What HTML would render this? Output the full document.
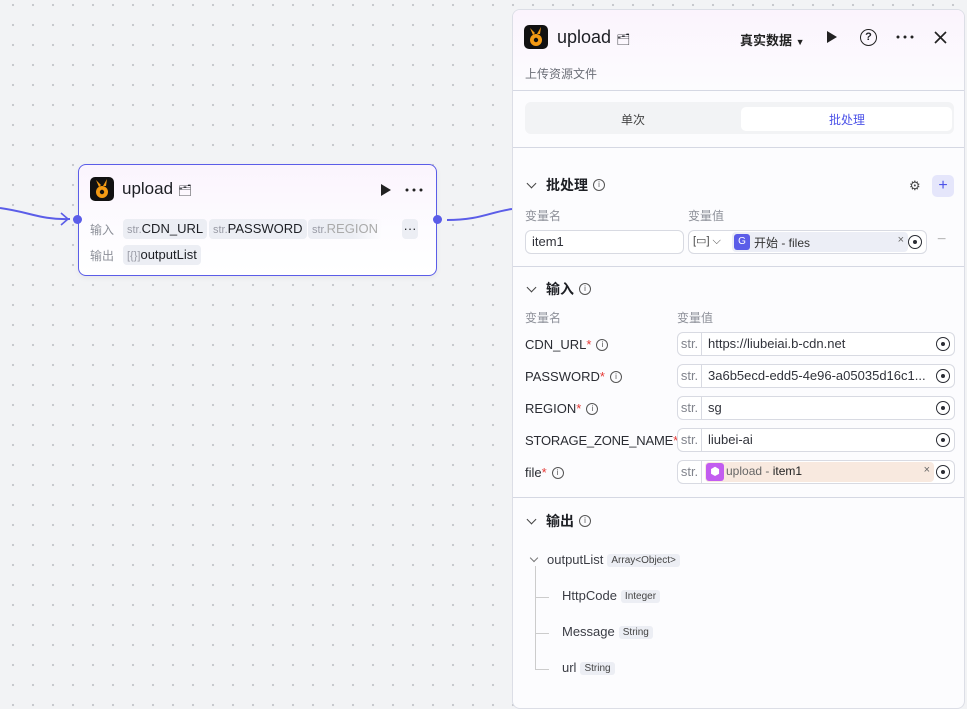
<!DOCTYPE html>
<html><head><meta charset="utf-8"><style>
*{box-sizing:border-box;margin:0;padding:0}
body{width:967px;height:698px;overflow:hidden;position:relative;font-family:"Liberation Sans","Noto Sans CJK SC",sans-serif;background-color:#f2f3f5;
background-image:radial-gradient(circle,#c6c7cc 1px,transparent 1.3px);background-size:20px 20px;background-position:3px -5px;color:#1d1f24}
.a{position:absolute}
.node{left:78px;top:164px;width:359px;height:112px;border:1px solid #5b5de8;border-radius:8px;background:linear-gradient(#fbf4fd,#fdfcff 60%,#fff);box-shadow:0 2px 6px rgba(0,0,0,.05)}
.logo{width:24px;height:24px;border-radius:5px;background:#111;overflow:hidden}
.tag{background:#eceef4;border-radius:4px;height:20px;line-height:20px;font-size:13px;padding:0 4px;color:#1d1f24}
.tag i{font-style:normal;color:#9a9ca6;font-size:11px}
.lbl{font-size:12px;color:#8d9099}
.panel{left:512px;top:9px;width:453px;height:700px;border:1px solid #dcdee6;border-radius:8px;background:#fcfcfe;overflow:hidden}
.hline{height:1px;background:#d5d8e3;left:0;width:453px}
.inp{border:1px solid #d8dae2;border-radius:6px;height:24px;background:#fff;font-size:13px}
.str{position:absolute;left:0;top:0;width:24px;height:22px;border-right:1px solid #d8dae2;color:#80838c;font-size:13px;line-height:22px;text-align:center}
.val{position:absolute;left:30px;top:0;line-height:22px;color:#30323a}
.tgt{position:absolute;right:4px;top:4px;width:14px;height:14px;border:1.5px solid #2a2c33;border-radius:50%}
.tgt:after{content:"";position:absolute;left:3.5px;top:3.5px;width:4px;height:4px;background:#2a2c33;border-radius:50%}
.name{font-size:13px;color:#2a2c33;line-height:16px}
.name b{color:#e53935;font-weight:normal}
.info{display:inline-block;width:12px;height:12px;border:1px solid #555;border-radius:50%;font-size:8px;line-height:10px;text-align:center;vertical-align:middle;margin-left:5px;margin-top:-2px;color:#555;font-style:normal;font-weight:normal}
.sec{font-size:14px;font-weight:bold;color:#1d1f24;line-height:18px}
.chev{width:7px;height:7px;border-right:1.5px solid #444;border-bottom:1.5px solid #444;transform:rotate(45deg)}
.ttag{display:inline-block;background:#eceef4;border-radius:3px;font-size:10px;padding:1px 4px;color:#444;margin-left:4px;vertical-align:1px}
.tn{font-size:13px;color:#3a3c44}
</style></head><body>
<svg class="a" style="left:0;top:0" width="967" height="698">
<path d="M0 208 C30 212,40 220,70 219" stroke="#5b5de8" stroke-width="2" fill="none"/>
<path d="M61 213 L68 219 L61 225" stroke="#5b5de8" stroke-width="1.6" fill="none"/>
<path d="M447 220 C480 220,490 212,512 209" stroke="#5b5de8" stroke-width="2" fill="none"/>
</svg>
<div class="a node">
 <div class="a logo" style="left:11px;top:12px"><svg width="24" height="24"><circle cx="12" cy="15" r="6" fill="#f39a14"/><circle cx="12" cy="15" r="2.2" fill="#111"/><path d="M9 10 L6 3 L11 8 Z M13 9 L17 2 L16 9Z" fill="#f39a14"/></svg></div>
 <div class="a" style="left:43px;top:14px;font-size:17px;color:#1d1f24">upload <span style="font-size:11px">&#x1F5C2;</span></div>
 <svg class="a" style="left:301px;top:18px" width="12" height="14"><path d="M1 1 L11 7 L1 13Z" fill="#222"/></svg>
 <svg class="a" style="left:326px;top:23px" width="20" height="4"><circle cx="2" cy="2" r="1.5" fill="#222"/><circle cx="9" cy="2" r="1.5" fill="#222"/><circle cx="16" cy="2" r="1.5" fill="#222"/></svg>
 <div class="a lbl" style="left:11px;top:56px">输入</div>
 <div class="a tag" style="left:44px;top:54px"><i>str.</i>CDN_URL</div>
 <div class="a tag" style="left:130px;top:54px"><i>str.</i>PASSWORD</div>
 <div class="a tag" style="left:229px;top:54px;color:#aaa;background:linear-gradient(90deg,#eceef4 60%,rgba(236,238,244,0))"><i>str.</i>REGION</div>
 <div class="a tag" style="left:323px;top:54px;width:16px;text-align:center;padding:0">···</div>
 <div class="a lbl" style="left:11px;top:82px">输出</div>
 <div class="a tag" style="left:44px;top:80px"><i>[{}]</i>outputList</div>
</div>
<div class="a" style="left:73px;top:215px;width:9px;height:9px;border-radius:50%;background:#5b5de8"></div>
<div class="a" style="left:433px;top:215px;width:9px;height:9px;border-radius:50%;background:#5b5de8"></div>

<div class="a panel">
 <div class="a" style="left:0;top:0;width:453px;height:80px;background:linear-gradient(#fbf4fd,#fcfcfe)"></div>
 <div class="a logo" style="left:11px;top:15px"><svg width="24" height="24"><circle cx="12" cy="15" r="6" fill="#f39a14"/><circle cx="12" cy="15" r="2.2" fill="#111"/><path d="M9 10 L6 3 L11 8 Z M13 9 L17 2 L16 9Z" fill="#f39a14"/></svg></div>
 <div class="a" style="left:44px;top:17px;font-size:18px">upload <span style="font-size:11px">&#x1F5C2;</span></div>
 <div class="a" style="left:227px;top:20px;font-size:13px;font-weight:bold;color:#222">真实数据 <span style="font-size:9px">▼</span></div>
 <svg class="a" style="left:313px;top:20px" width="12" height="14"><path d="M1 1 L11 7 L1 13Z" fill="#222"/></svg>
 <div class="a" style="left:347px;top:19px;width:17px;height:17px;border:1.5px solid #222;border-radius:50%;font-size:11px;text-align:center;line-height:14px;font-weight:bold">?</div>
 <svg class="a" style="left:383px;top:25px" width="20" height="4"><circle cx="2" cy="2" r="1.5" fill="#222"/><circle cx="9" cy="2" r="1.5" fill="#222"/><circle cx="16" cy="2" r="1.5" fill="#222"/></svg>
 <svg class="a" style="left:421px;top:21px" width="13" height="13"><path d="M1 1 L12 12 M12 1 L1 12" stroke="#222" stroke-width="1.7"/></svg>
 <div class="a" style="left:12px;top:55px;font-size:12px;color:#6c6f78">上传资源文件</div>
 <div class="a hline" style="top:80px"></div>
 <div class="a" style="left:12px;top:92px;width:429px;height:32px;background:#f2f3f5;border-radius:6px"></div>
 <div class="a" style="left:228px;top:97px;width:211px;height:24px;background:#fff;border-radius:5px"></div>
 <div class="a" style="left:108px;top:101px;font-size:12px;color:#444">单次</div>
 <div class="a" style="left:316px;top:101px;font-size:12px;color:#4d53e8">批处理</div>
 <div class="a hline" style="top:137px"></div>

 <div class="a chev" style="left:15px;top:170px"></div>
 <div class="a sec" style="left:33px;top:166px">批处理<i class="info">i</i></div>
 <div class="a" style="left:396px;top:168px;font-size:13px;color:#444">⚙</div>
 <div class="a" style="left:419px;top:165px;width:22px;height:22px;background:#e5e6fb;border-radius:5px;color:#4d53e8;text-align:center;line-height:21px;font-size:16px">+</div>
 <div class="a lbl" style="left:12px;top:197px">变量名</div>
 <div class="a lbl" style="left:175px;top:197px">变量值</div>
 <div class="a inp" style="left:12px;top:220px;width:159px;line-height:22px;padding-left:6px;color:#30323a">item1</div>
 <div class="a inp" style="left:175px;top:220px;width:239px">
  <span class="a" style="left:4px;top:3px;font-size:11px;color:#444">[▭] ⌵</span>
  <div class="a" style="left:43px;top:1px;width:176px;height:20px;background:#eceef6;border-radius:4px">
   <div class="a" style="left:2px;top:2px;width:16px;height:16px;background:#5b5de8;border-radius:3px;color:#fff;font-size:10px;text-align:center;line-height:16px">G</div>
   <span class="a" style="left:22px;top:2px;font-size:12px;color:#333">开始 - files</span>
   <span class="a" style="right:4px;top:2px;font-size:11px;color:#666">×</span>
  </div>
  <div class="tgt"></div>
 </div>
 <div class="a" style="left:424px;top:221px;color:#bbb;font-size:16px">−</div>
 <div class="a hline" style="top:256px"></div>

 <div class="a chev" style="left:15px;top:274px"></div>
 <div class="a sec" style="left:33px;top:270px">输入<i class="info">i</i></div>
 <div class="a lbl" style="left:12px;top:299px">变量名</div>
 <div class="a lbl" style="left:164px;top:299px">变量值</div>

 <div class="a name" style="left:12px;top:327px">CDN_URL<b>*</b><i class="info">i</i></div>
 <div class="a inp" style="left:164px;top:322px;width:278px"><div class="str">str.</div><div class="val">https://liubeiai.b-cdn.net</div><div class="tgt"></div></div>
 <div class="a name" style="left:12px;top:359px">PASSWORD<b>*</b><i class="info">i</i></div>
 <div class="a inp" style="left:164px;top:354px;width:278px"><div class="str">str.</div><div class="val">3a6b5ecd-edd5-4e96-a05035d16c1...</div><div class="tgt"></div></div>
 <div class="a name" style="left:12px;top:391px">REGION<b>*</b><i class="info">i</i></div>
 <div class="a inp" style="left:164px;top:386px;width:278px"><div class="str">str.</div><div class="val">sg</div><div class="tgt"></div></div>
 <div class="a name" style="left:12px;top:423px;letter-spacing:-0.2px">STORAGE_ZONE_NAME<b>*</b></div>
 <div class="a inp" style="left:164px;top:418px;width:278px"><div class="str">str.</div><div class="val">liubei-ai</div><div class="tgt"></div></div>
 <div class="a name" style="left:12px;top:455px">file<b>*</b><i class="info">i</i></div>
 <div class="a inp" style="left:164px;top:450px;width:278px"><div class="str">str.</div>
  <div class="a" style="left:27px;top:1px;width:229px;height:20px;background:#f8e9df;border-radius:4px">
   <div class="a" style="left:1px;top:1px;width:18px;height:18px;background:#c25cf0;border-radius:3px;color:#fff;font-size:11px;text-align:center;line-height:18px">⬢</div>
   <span class="a" style="left:21px;top:2px;font-size:12px;color:#666">upload - <span style="color:#222">item1</span></span>
   <span class="a" style="right:4px;top:2px;font-size:11px;color:#666">×</span>
  </div><div class="tgt"></div></div>
 <div class="a hline" style="top:487px"></div>

 <div class="a chev" style="left:15px;top:506px"></div>
 <div class="a sec" style="left:33px;top:502px">输出<i class="info">i</i></div>
 <div class="a" style="left:18px;top:545px;width:6px;height:6px;border-right:1px solid #777;border-bottom:1px solid #777;transform:rotate(45deg)"></div>
 <div class="a tn" style="left:34px;top:542px">outputList<span class="ttag">Array&lt;Object&gt;</span></div>
 <div class="a" style="left:22px;top:556px;width:14px;height:104px;border-left:1px solid #ccc;border-bottom:1px solid #ccc"></div>
 <div class="a" style="left:22px;top:587px;width:14px;border-top:1px solid #ccc"></div>
 <div class="a" style="left:22px;top:623px;width:14px;border-top:1px solid #ccc"></div>
 <div class="a tn" style="left:49px;top:578px">HttpCode<span class="ttag">Integer</span></div>
 <div class="a tn" style="left:49px;top:614px">Message<span class="ttag">String</span></div>
 <div class="a tn" style="left:49px;top:650px">url<span class="ttag">String</span></div>
</div>
</body></html>
